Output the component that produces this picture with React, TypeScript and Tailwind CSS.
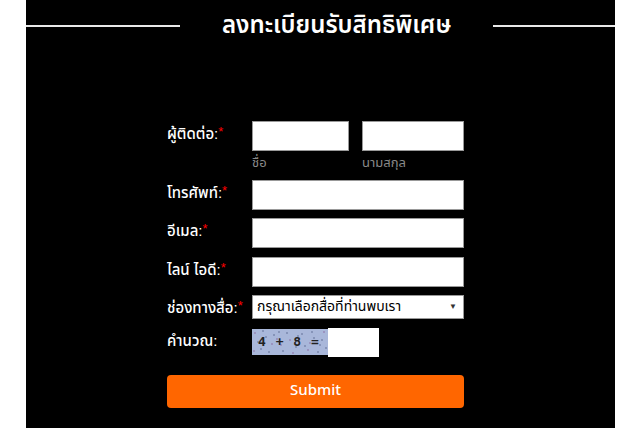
import React from 'react'

const labelFont = { fontFamily: '"Liberation Sans", Tahoma, "Noto Sans Thai", "Noto Sans", sans-serif' }

function Label({ text, required = true }: { text: string; required?: boolean }) {
  return (
    <div className="w-[85px] shrink-0 pt-[3px] text-[15px] font-medium leading-[20px] text-white">
      {text}
      {required && <span className="relative -top-[3px] text-[13px] text-[#ff0000]">*</span>}
    </div>
  )
}

function Captcha() {
  // speckles on the captcha picture
  const dots = [
    [3, 4], [9, 20], [14, 8], [20, 15], [27, 3], [31, 22], [38, 11], [44, 18], [50, 5], [56, 21],
    [62, 9], [68, 16], [72, 3], [6, 13], [17, 23], [25, 10], [35, 4], [47, 12], [58, 14], [66, 23],
    [11, 2], [41, 24], [53, 17], [70, 11], [29, 16], [22, 6], [60, 3], [2, 22], [46, 7], [74, 19],
  ]
  return (
    <div className="relative flex h-[26px] w-[76px] items-center whitespace-nowrap bg-[#a9b7da] pl-[6px] text-[13px] font-bold text-[#222]">
      <svg className="absolute inset-0" width="76" height="26">
        {dots.map(([x, y], i) => (
          <circle key={i} cx={x} cy={y} r="0.8" fill={i % 3 === 0 ? '#8a6aa0' : '#5a6a90'} />
        ))}
      </svg>
      <span className="relative tracking-[1px]" style={{ fontFamily: '"DejaVu Sans Mono", monospace' }}>4 + 8 =</span>
    </div>
  )
}

export default function App() {
  return (
    <div className="flex h-[428px] w-[640px] bg-white">
      <div className="ml-[26px] flex w-[589px] flex-col bg-black" style={labelFont}>
        {/* header */}
        <div className="flex h-[52px] items-center">
          <div className="h-[2px] w-[154px] bg-[#e8e8e8]" />
          <h1
            className="mx-[42px] whitespace-nowrap text-[24px] font-semibold leading-none text-white"
            style={{ fontFamily: '"Noto Sans Thai", "Noto Sans", sans-serif' }}
          >
            ลงทะเบียนรับสิทธิพิเศษ
          </h1>
          <div className="h-[2px] flex-1 bg-[#e8e8e8]" />
        </div>

        <div className="ml-[141px] mt-[69px] flex w-[297px] flex-col">
          <div className="flex">
            <Label text="ผู้ติดต่อ:" />
            <div className="flex gap-[13px]">
              <div className="flex w-[97px] flex-col">
                <div className="h-[30px] border border-[#999] bg-white" />
                <span className="mt-[2px] text-[13px] text-[#8a8a8a]">ชื่อ</span>
              </div>
              <div className="flex w-[102px] flex-col">
                <div className="h-[30px] border border-[#999] bg-white" />
                <span className="mt-[2px] text-[13px] text-[#8a8a8a]">นามสกุล</span>
              </div>
            </div>
          </div>

          <div className="mt-[7px] flex">
            <Label text="โทรศัพท์:" />
            <div className="h-[30px] w-[212px] border border-[#999] bg-white" />
          </div>
          <div className="mt-[8px] flex">
            <Label text="อีเมล:" />
            <div className="h-[30px] w-[212px] border border-[#999] bg-white" />
          </div>
          <div className="mt-[9px] flex">
            <Label text="ไลน์ ไอดี:" />
            <div className="h-[30px] w-[212px] border border-[#999] bg-white" />
          </div>
          <div className="mt-[8px] flex">
            <Label text="ช่องทางสื่อ:" />
            <div className="flex h-[24px] w-[212px] items-center justify-between border border-[#999] bg-white pl-[4px] pr-[6px]">
              <span className="text-[14px] text-black">กรุณาเลือกสื่อที่ท่านพบเรา</span>
              <span className="text-[8px] text-[#333]">▼</span>
            </div>
          </div>
          <div className="mt-[9px] flex">
            <Label text="คำนวณ:" required={false} />
            <div className="flex items-center">
              <Captcha />
              <div className="h-[29px] w-[51px] bg-white" />
            </div>
          </div>

          <button
            className="mt-[18px] h-[33px] w-[297px] rounded-[4px] bg-[#ff6600] text-[15px] font-medium text-white"
            style={{ fontFamily: '"Noto Sans Thai", "Noto Sans", sans-serif' }}
          >
            Submit
          </button>
        </div>
      </div>
    </div>
  )
}
